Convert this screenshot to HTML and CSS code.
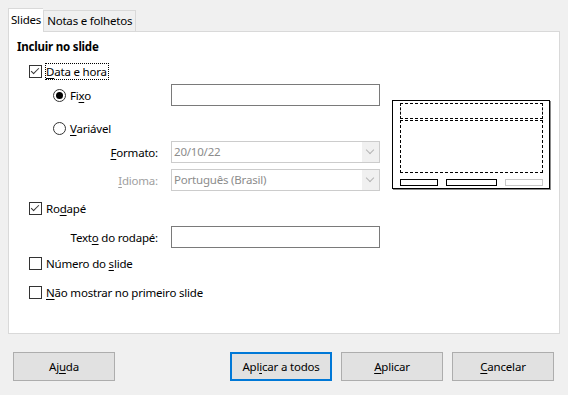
FILE: index.html
```html
<!DOCTYPE html>
<html lang="pt-BR">
<head>
    <meta charset="UTF-8">
    <title>Cabeçalho e rodapé</title>
    <link rel="stylesheet" href="styles.css">
</head>
<body>
    <div class="dialog">
        <div class="tabs">
            <div class="tab active">Slides</div>
            <div class="tab">Notas e folhetos</div>
        </div>
        <div class="panel">
            <div class="form">
                <div class="heading">Incluir no slide</div>

                <div class="row lvl1 r-data">
                    <span class="check on"></span>
                    <span class="text focus"><u>D</u>ata e hora</span>
                </div>

                <div class="row field lvl2 r-fixo">
                    <span class="radio on"></span>
                    <span class="text">Fi<u>x</u>o</span>
                    <span class="input"></span>
                </div>

                <div class="row lvl2 r-var">
                    <span class="radio"></span>
                    <span class="text"><u>V</u>ariável</span>
                </div>

                <div class="row field r-formato">
                    <span class="label"><u>F</u>ormato:</span>
                    <span class="combo"><span class="value">20/10/22</span><span class="drop"></span></span>
                </div>

                <div class="row field r-idioma">
                    <span class="label disabled"><u>I</u>dioma:</span>
                    <span class="combo"><span class="value">Português (Brasil)</span><span class="drop"></span></span>
                </div>

                <div class="row lvl1 r-rodape">
                    <span class="check on"></span>
                    <span class="text">Ro<u>d</u>apé</span>
                </div>

                <div class="row field r-texto">
                    <span class="label">Text<u>o</u> do rodapé:</span>
                    <span class="input"></span>
                </div>

                <div class="row lvl1 r-numero">
                    <span class="check"></span>
                    <span class="text">Número do <u>s</u>lide</span>
                </div>

                <div class="row lvl1 r-nao">
                    <span class="check"></span>
                    <span class="text"><u>N</u>ão mostrar no primeiro slide</span>
                </div>
            </div>

            <div class="preview">
                <div class="pv-head"></div>
                <div class="pv-body"></div>
                <div class="pv-foot">
                    <span class="pv-box small"></span>
                    <span class="pv-box wide"></span>
                    <span class="pv-box small off"></span>
                </div>
            </div>
        </div>

        <div class="buttons">
            <button>Aj<u>u</u>da</button>
            <span class="spacer"></span>
            <button class="default">Apl<u>i</u>car a todos</button>
            <button><u>A</u>plicar</button>
            <button><u>C</u>ancelar</button>
        </div>
    </div>
</body>
</html>
```

FILE: styles.css
```css
body {
    margin: 0;
    background-color: #f0f0f0;
    font-family: "Noto Sans", sans-serif;
    font-size: 11.5px;
    letter-spacing: -0.2px;
    color: #000;
}
u { text-decoration-thickness: 1px; text-underline-offset: 2px; }

.dialog { padding: 8px; width: 552px; }

/* abas */
.tabs {
    display: flex;
    align-items: flex-end;
    height: 23px;
}
.tab {
    height: 21px;
    line-height: 19px;
    padding: 0 3px;
    border: 1px solid #d9d9d9;
    border-bottom: none;
    background-color: #f0f0f0;
    box-sizing: border-box;
}
.tab.active {
    height: 24px;
    line-height: 22px;
    background-color: #fff;
    border-right: none;
    position: relative;
    margin-bottom: -1px;
    padding: 0 2px;
}

.panel {
    display: flex;
    height: 303px;
    box-sizing: border-box;
    border: 1px solid #d9d9d9;
    background-color: #fff;
}

/* formulário */
.form {
    width: 371px;
    display: flex;
    flex-direction: column;
}
.heading {
    font-weight: bold;
    height: 16px;
    line-height: 16px;
    margin: 7px 0 0 8px;
}
.row {
    display: flex;
    align-items: center;
    height: 18px;
}
.row.field { height: 22px; }
.lvl1 { padding-left: 20px; }
.lvl2 { padding-left: 44px; }

.r-data { margin-top: 7px; }
.r-fixo { margin-top: 4px; }
.r-var { margin-top: 13px; }
.r-formato { margin-top: 4px; }
.r-idioma { margin-top: 6px; }
.r-rodape { margin-top: 8px; }
.r-texto { margin-top: 9px; }
.r-numero { margin-top: 6px; }
.r-nao { margin-top: 11px; }

.text {
    border: 1px dotted transparent;
    line-height: 15px;
    padding: 0 1px 0 0;
}
.text.focus { border-color: #000; }

.check {
    width: 13px;
    height: 13px;
    box-sizing: border-box;
    border: 1px solid #333;
    margin-right: 3px;
    background: #fff;
    position: relative;
}
.check.on::after {
    content: "";
    position: absolute;
    left: 3px;
    top: 0px;
    width: 3px;
    height: 7px;
    border: solid #333;
    border-width: 0 1px 1px 0;
    transform: rotate(45deg);
}
.radio {
    width: 13px;
    height: 13px;
    box-sizing: border-box;
    border: 1px solid #333;
    border-radius: 50%;
    margin-right: 4px;
    display: flex;
    align-items: center;
    justify-content: center;
}
.radio.on::after {
    content: "";
    width: 7px;
    height: 7px;
    border-radius: 50%;
    background: #000;
}
.radio + .text { border: none; }

.label {
    flex: 1;
    text-align: right;
    padding-right: 13px;
}
.label.disabled { color: #a0a0a0; }

.input, .combo {
    margin-left: auto;
    width: 209px;
    height: 22px;
    box-sizing: border-box;
    border: 1px solid #7a7a7a;
    background: #fff;
}
.combo {
    display: flex;
    border-color: #cccccc;
    color: #8c8c8c;
}
.combo .value {
    flex: 1;
    line-height: 20px;
    padding-left: 2px;
}
.combo .drop {
    width: 17px;
    background: #f0f0f0;
    position: relative;
}
.combo .drop::after {
    content: "";
    position: absolute;
    left: 5px;
    top: 5px;
    width: 5px;
    height: 5px;
    border: solid #b5b5b5;
    border-width: 0 1px 1px 0;
    transform: rotate(45deg);
}

/* pré-visualização */
.preview {
    margin: 68px 0 0 12px;
    width: 158px;
    height: 89px;
    box-sizing: border-box;
    border: 1px solid #000;
    box-shadow: 1px 1px 0 #8a8a8a;
    padding: 2px 6px 2px 7px;
    display: flex;
    flex-direction: column;
}
.pv-head {
    height: 16px;
    border: 1px dashed #000;
    box-sizing: border-box;
}
.pv-body {
    height: 53px;
    margin-top: 1px;
    border: 1px dashed #000;
    box-sizing: border-box;
}
.pv-foot {
    display: flex;
    justify-content: space-between;
    margin-top: 6px;
    height: 7px;
}
.pv-box {
    border: 1px solid #000;
    box-sizing: border-box;
}
.pv-box.small { width: 38px; }
.pv-box.wide { width: 51px; }
.pv-box.off { border-color: #c8c8c8; }

/* botões */
.buttons {
    display: flex;
    gap: 9px;
    margin-top: 18px;
    padding: 0 6px 0 5px;
}
.spacer { flex: 1; }
.buttons button {
    width: 102px;
    height: 29px;
    font-family: inherit;
    font-size: 11.5px;
    letter-spacing: -0.2px;
    color: #000;
    background-color: #e1e1e1;
    border: 1px solid #adadad;
    padding: 0;
}
.buttons button.default { border: 2px solid #0078d7; }
```
